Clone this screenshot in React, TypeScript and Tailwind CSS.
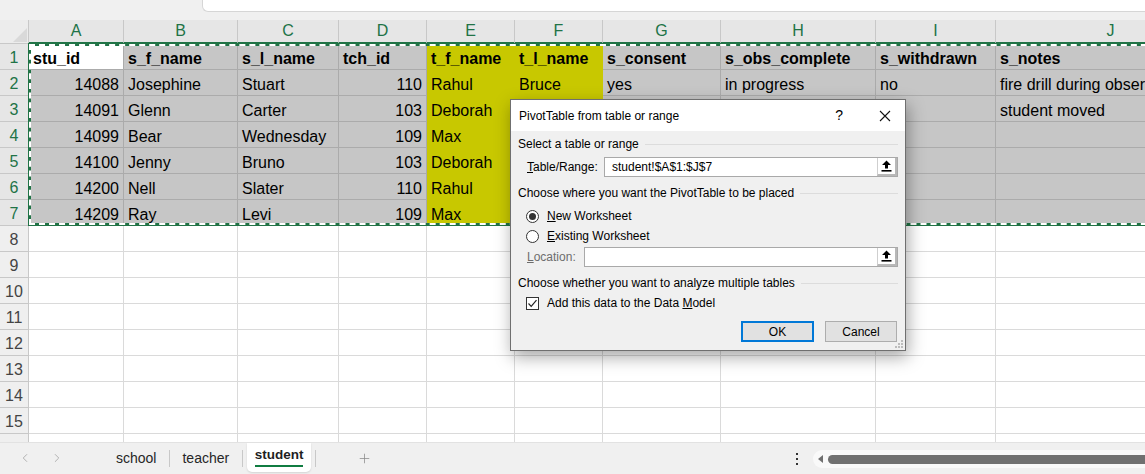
import React from 'react';
import { ChevronLeft, ChevronRight, Plus } from 'lucide-react';

type Col = { letter: string; width: string; num?: boolean; yellow?: boolean };

const COLS: Col[] = [
  { letter: 'A', width: 'w-[95px]', num: true },
  { letter: 'B', width: 'w-[114px]' },
  { letter: 'C', width: 'w-[101px]' },
  { letter: 'D', width: 'w-[88px]', num: true },
  { letter: 'E', width: 'w-[88px]', yellow: true },
  { letter: 'F', width: 'w-[88px]', yellow: true },
  { letter: 'G', width: 'w-[118px]' },
  { letter: 'H', width: 'w-[155px]' },
  { letter: 'I', width: 'w-[120px]' },
  { letter: 'J', width: 'w-[230px]' },
];

const DATA: string[][] = [
  ['stu_id', 's_f_name', 's_l_name', 'tch_id', 't_f_name', 't_l_name', 's_consent', 's_obs_complete', 's_withdrawn', 's_notes'],
  ['14088', 'Josephine', 'Stuart', '110', 'Rahul', 'Bruce', 'yes', 'in progress', 'no', 'fire drill during observation'],
  ['14091', 'Glenn', 'Carter', '103', 'Deborah', 'Griffin', 'yes', 'complete', 'no', 'student moved'],
  ['14099', 'Bear', 'Wednesday', '109', 'Max', 'Ashby', 'yes', 'complete', 'no', ''],
  ['14100', 'Jenny', 'Bruno', '103', 'Deborah', 'Griffin', 'no', '', 'no', ''],
  ['14200', 'Nell', 'Slater', '110', 'Rahul', 'Bruce', 'yes', 'complete', 'no', ''],
  ['14209', 'Ray', 'Levi', '109', 'Max', 'Ashby', 'yes', 'in progress', 'no', ''],
];

// 15 numbered rows, then the sliver of row 16 under them
const ROW_COUNT = 16;

function cellTone(r: number, c: number) {
  if (r >= 7) return 'bg-white border-[#dadada]';
  if (r === 0 && c === 0) return 'bg-white border-[#ababab]';
  if (COLS[c].yellow) return 'bg-[#c8c800] border-[#c8c800]';
  return 'bg-[#c6c6c6] border-[#ababab]';
}

const UploadGlyph = () => (
  <svg width="11" height="12" viewBox="0 0 11 12">
    <path d="M5.5 0.5 L10 5 L7 5 L7 8.5 L4 8.5 L4 5 L1 5 Z" fill="#000" />
    <rect x="0.5" y="10" width="10" height="1.6" fill="#000" />
  </svg>
);

const SectionHead = ({ text, className }: { text: string; className: string }) => (
  <div className={`flex items-center gap-[6px] h-[16px] ${className}`}>
    <span className="whitespace-nowrap">{text}</span>
    <div className="flex-1 h-px bg-[#dcdcdc]" />
  </div>
);

const PivotDialog = () => (
  <div className="absolute left-[510px] top-[99px] w-[396px] h-[252px] border border-[#6f6f6f] bg-[#f0f0f0] shadow-[2px_6px_16px_rgba(0,0,0,0.35)] text-[12px] text-black flex flex-col">
    <div className="h-[31px] bg-white flex items-center pl-[8px] pr-[14px]">
      <span className="flex-1">PivotTable from table or range</span>
      <span className="text-[14px] mr-[36px]">?</span>
      <svg width="12" height="12" viewBox="0 0 12 12">
        <path d="M1 1 L11 11 M11 1 L1 11" stroke="#111" strokeWidth="1.1" />
      </svg>
    </div>
    <div className="flex-1 px-[7px] flex flex-col">
      <SectionHead text="Select a table or range" className="mt-[5px]" />
      <div className="flex items-center h-[20px] mt-[5px]">
        <span className="ml-[9px] w-[77px]"><u>T</u>able/Range:</span>
        <div className="flex-1 h-[20px] bg-white border border-[#a9a9a9] flex items-center">
          <span className="flex-1 pl-[7px]">student!$A$1:$J$7</span>
          <div className="w-[20px] h-[18px] border-l border-[#cfcfcf] border-r-2 border-b-2 border-r-[#b8b8b8] border-b-[#b8b8b8] flex items-center justify-center">
            <UploadGlyph />
          </div>
        </div>
      </div>
      <SectionHead text="Choose where you want the PivotTable to be placed" className="mt-[8px]" />
      <div className="flex items-center h-[16px] mt-[7px] ml-[8px]">
        <div className="w-[13px] h-[13px] rounded-full border border-[#333] bg-white flex items-center justify-center">
          <div className="w-[7px] h-[7px] rounded-full bg-[#333]" />
        </div>
        <span className="ml-[8px]"><u>N</u>ew Worksheet</span>
      </div>
      <div className="flex items-center h-[16px] mt-[4px] ml-[8px]">
        <div className="w-[13px] h-[13px] rounded-full border border-[#333] bg-white" />
        <span className="ml-[8px]"><u>E</u>xisting Worksheet</span>
      </div>
      <div className="flex items-center h-[20px] mt-[3px]">
        <span className="ml-[9px] w-[57px] text-[#6d6d6d]"><u>L</u>ocation:</span>
        <div className="flex-1 h-[20px] bg-white border border-[#a9a9a9] flex items-center">
          <span className="flex-1" />
          <div className="w-[20px] h-[18px] border-l border-[#cfcfcf] border-r-2 border-b-2 border-r-[#b8b8b8] border-b-[#b8b8b8] flex items-center justify-center">
            <UploadGlyph />
          </div>
        </div>
      </div>
      <SectionHead text="Choose whether you want to analyze multiple tables" className="mt-[8px]" />
      <div className="flex items-center h-[16px] mt-[4px] ml-[8px]">
        <div className="w-[13px] h-[13px] border border-[#333] bg-white flex items-center justify-center">
          <svg width="11" height="11" viewBox="0 0 11 11">
            <path d="M1.5 5.5 L4.2 8.3 L9.5 2.2" stroke="#222" strokeWidth="1.2" fill="none" />
          </svg>
        </div>
        <span className="ml-[8px]">Add this data to the Data <u>M</u>odel</span>
      </div>
      <div className="flex justify-end items-center gap-[11px] mt-[10px] pr-[1px]">
        <button className="w-[73px] h-[21px] border-2 border-[#0078d7] bg-[#e1e1e1] text-[12px]">OK</button>
        <button className="w-[72px] h-[21px] border border-[#adadad] bg-[#e1e1e1] text-[12px]">Cancel</button>
      </div>
    </div>
    <svg className="absolute right-[1px] bottom-[1px]" width="10" height="10" viewBox="0 0 10 10">
      <rect x="7" y="1" width="2" height="2" fill="#bcbcbc" />
      <rect x="4" y="4" width="2" height="2" fill="#bcbcbc" />
      <rect x="7" y="4" width="2" height="2" fill="#bcbcbc" />
      <rect x="1" y="7" width="2" height="2" fill="#bcbcbc" />
      <rect x="4" y="7" width="2" height="2" fill="#bcbcbc" />
      <rect x="7" y="7" width="2" height="2" fill="#bcbcbc" />
    </svg>
  </div>
);

const Grid = () => (
  <div className="relative h-[422px] overflow-hidden bg-white">
    <div className="flex h-[24px]">
      <div className="w-[29px] shrink-0 bg-[#ececec] border-r border-b border-[#c8c8c8] flex items-end justify-end">
        <svg width="16" height="16" viewBox="0 0 16 16">
          <polygon points="15,1 15,15 1,15" fill="#d9d9d9" />
        </svg>
      </div>
      {COLS.map(col => (
        <div
          key={col.letter}
          className={`${col.width} shrink-0 bg-[#e6e6e6] border-r border-[#c8c8c8] border-b-2 border-b-[#217346] flex items-center justify-center text-[#217346] text-[16px]`}
        >
          {col.letter}
        </div>
      ))}
    </div>
    {Array.from({ length: ROW_COUNT }, (_, r) => (
      <div key={r} className="flex h-[26px]">
        <div
          className={`w-[29px] shrink-0 border-r border-b border-[#c8c8c8] flex items-center justify-center pt-[3px] text-[16px] ${r < 7 ? 'bg-[#e6e6e6] text-[#217346]' : 'bg-[#efefef] text-[#444]'}`}
        >
          {r < 15 ? r + 1 : ''}
        </div>
        {COLS.map((col, c) => {
          const v = DATA[r]?.[c] ?? '';
          const right = col.num && r > 0;
          return (
            <div
              key={col.letter}
              className={`${col.width} shrink-0 border-r border-b ${cellTone(r, c)} flex items-center px-[4px] pt-[5px] text-[16px] text-black whitespace-nowrap overflow-hidden ${right ? 'justify-end' : 'justify-start'} ${r === 0 ? 'font-bold' : ''}`}
            >
              {v}
            </div>
          );
        })}
      </div>
    ))}
    {/* marching ants round the copied range */}
    <div className="absolute left-[28px] top-[23px] w-[1200px] h-[183px] border-[3px] border-[#217346] pointer-events-none">
      <div className="absolute -inset-[2px] border-2 border-dashed border-white" />
    </div>
  </div>
);

const TabBar = () => (
  <div className="h-[32px] bg-[#f0f0f0] border-t border-[#e2e2e2] flex items-start text-[14px] text-[#262626]">
    <div className="flex items-center h-[30px] pl-[18px] gap-[18px] text-[#a8a8a8]">
      <ChevronLeft size={14} strokeWidth={1.5} />
      <ChevronRight size={14} strokeWidth={1.5} />
    </div>
    <div className="flex items-center h-[30px] ml-[52px]">
      <span>school</span>
      <div className="w-px h-[17px] bg-[#c8c8c8] ml-[13px] mr-[12px]" />
      <span>teacher</span>
      <div className="w-px h-[17px] bg-[#c8c8c8] ml-[13px] mr-[4px]" />
    </div>
    <div className="w-[64px] h-[29px] bg-white rounded-b-[5px] shadow-[0_1px_2px_rgba(0,0,0,0.12)] flex flex-col items-center pt-[3px]">
      <span className="font-bold text-[13.5px] text-[#1f1f1f] leading-[18px]">student</span>
      <div className="w-[48px] h-[2px] bg-[#107c41] mt-[1px]" />
    </div>
    <div className="flex items-center h-[30px]">
      <div className="w-px h-[17px] bg-[#c8c8c8] ml-[4px]" />
      <Plus size={15} strokeWidth={1.2} className="ml-[41px] text-[#8a8a8a]" />
    </div>
    <div className="flex-1" />
    <div className="flex items-center h-[32px]">
      <svg width="4" height="12" viewBox="0 0 4 12" className="mr-[14px]">
        <rect x="1" y="0" width="2" height="2" fill="#333" />
        <rect x="1" y="5" width="2" height="2" fill="#333" />
        <rect x="1" y="10" width="2" height="2" fill="#333" />
      </svg>
      <div className="w-[342px] h-[18px] bg-[#f9f9f9] rounded-l-full flex items-center pl-[5px] -mr-[10px]">
        <svg width="6" height="8" viewBox="0 0 6 8">
          <polygon points="5,0 5,8 0,4" fill="#707070" />
        </svg>
        <div className="ml-[4px] flex-1 h-[9px] bg-[#707070] rounded-full" />
      </div>
    </div>
  </div>
);

export default function App() {
  return (
    <div className="relative w-[1145px] h-[474px] overflow-hidden bg-[#f0f0f0] font-['Liberation_Sans',Arial,sans-serif]">
      <div className="h-[20px] bg-[#f0f0f0]">
        <div className="ml-[202px] h-[12px] bg-white border-l border-b border-[#d6d6d6] rounded-bl-[6px]" />
      </div>
      <Grid />
      <TabBar />
      <PivotDialog />
    </div>
  );
}
